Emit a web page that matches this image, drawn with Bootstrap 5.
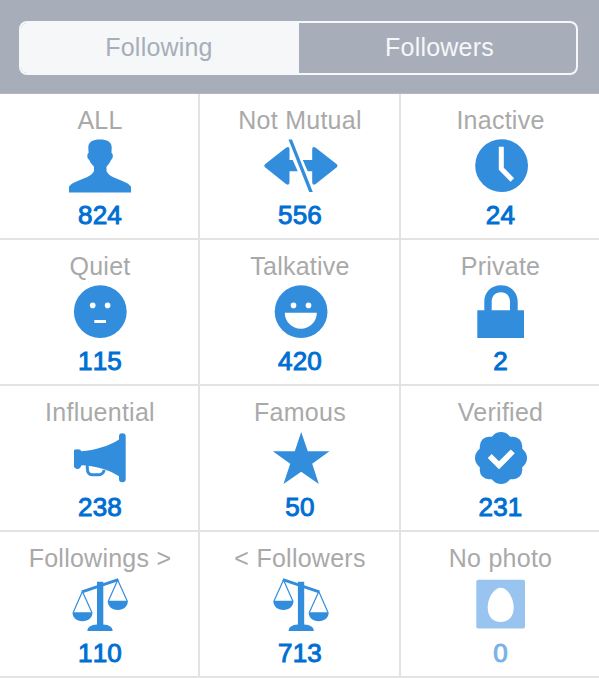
<!DOCTYPE html>
<html lang="en">
<head>
<meta charset="utf-8">
<meta name="viewport" content="width=device-width, initial-scale=1">
<title>Following</title>
<link rel="stylesheet" href="https://cdn.jsdelivr.net/npm/bootstrap@5.3.0/dist/css/bootstrap.min.css">
<style>
body{font-family:"Liberation Sans",Arial,sans-serif;background:#fff;overflow:hidden}
.topbar{height:94px;background:#a7aeb9;padding:21px 21px 0 19px;border-bottom:1px solid #b2b8c2}
.segment{height:54px;border:2px solid #f5f7f9;border-radius:8px;overflow:hidden}
.segment .btn{font-size:25px;line-height:30px;padding:0 0 2px;border:0;border-radius:0;color:#f5f7f9;letter-spacing:.2px}
.segment .btn.active{background:#f5f7f9;color:#a7aeb9;padding-right:2px}
.segment .btn:last-child{padding-left:5px}
.tiles{display:grid;grid-template-columns:200px 201px 200px;grid-auto-rows:146px}
.tile{padding-top:11px;box-shadow:inset -2px -2px #e3e3e4;color:#006fd3}
.tile-label{font-size:25px;line-height:30px;color:#a9a9a9;white-space:nowrap;letter-spacing:.25px}
.tile svg{width:80px;height:56px;margin:3px 0 6px;fill:#338ddd;flex:none}
.tile-count{font-size:26px;line-height:30px;letter-spacing:.2px;font-kerning:none;-webkit-text-stroke:1px currentColor}
.tile:not(:nth-child(3n+1)) .tile-label,.tile:not(:nth-child(3n+1)) .tile-count{margin-right:1px}
.tile.muted svg{fill:#99c4ef}
.tile.muted .tile-count{color:#7ab2e8}
</style>
</head>
<body>
<header class="topbar">
  <div class="segment btn-group d-flex" role="group">
    <button class="btn active w-50">Following</button>
    <button class="btn w-50">Followers</button>
  </div>
</header>
<main class="tiles">
  <div class="tile d-flex flex-column align-items-center">
    <div class="tile-label">ALL</div>
    <svg viewBox="0 0 80 56"><path d="M40 1.6C47 1.6 51.7 3.8 51.7 9.5L51.5 15C53.6 16 53.2 20.5 51 22C50 24.5 48.5 26.5 46.5 28.7V33C47.5 36 51 38.3 54.5 39.8C61 42.5 68 44.5 71 48.7V54.6H9V48.7C12 44.5 19 42.5 25.5 39.8C29 38.3 33 36 34 33V28.7C31.8 26.5 30.3 24.5 29.3 22C27.1 20.5 26.6 16 28.6 15L28.3 9.5C28.3 3.8 33 1.6 40 1.6Z"/></svg>
    <div class="tile-count">824</div>
  </div>
  <div class="tile d-flex flex-column align-items-center">
    <div class="tile-label">Not Mutual</div>
    <svg viewBox="0 0 80 56"><path d="M4 26.2L25 9.7Q28.5 7.8 28.5 11.5V22H31.7L36.7 33.3H28.5V44Q28.5 48 25 46L4 29.3Q2.3 27.7 4 26.2ZM75.8 26.2L54.7 9.7Q51.2 7.8 51.2 11.5V22H41.8L46.7 33.3H51.2V44Q51.2 48 54.7 46L75.8 29.3Q77.4 27.7 75.8 26.2ZM27.5 1.4H31L51.8 53.9H48.2Z"/></svg>
    <div class="tile-count">556</div>
  </div>
  <div class="tile d-flex flex-column align-items-center">
    <div class="tile-label">Inactive</div>
    <svg viewBox="0 0 80 56"><circle cx="40.6" cy="27.7" r="26.4"/><path d="M40.3 8.7V30.7L51.3 41.9" fill="none" stroke="#fff" stroke-width="5"/></svg>
    <div class="tile-count">24</div>
  </div>
  <div class="tile d-flex flex-column align-items-center">
    <div class="tile-label">Quiet</div>
    <svg viewBox="0 0 80 56"><circle cx="40.3" cy="27.7" r="26.4"/><g fill="#fff"><circle cx="32.7" cy="21.4" r="2.8"/><circle cx="47.6" cy="21.4" r="2.8"/><path d="M34.3 36H46V39H34.3Z"/></g></svg>
    <div class="tile-count">115</div>
  </div>
  <div class="tile d-flex flex-column align-items-center">
    <div class="tile-label">Talkative</div>
    <svg viewBox="0 0 80 56"><circle cx="40.1" cy="27.7" r="26.4"/><g fill="#fff"><circle cx="32.5" cy="21.4" r="2.8"/><circle cx="47.5" cy="21.4" r="2.8"/><path d="M23.8 28.7H55.8A16 16 0 0 1 23.8 28.7Z"/></g></svg>
    <div class="tile-count">420</div>
  </div>
  <div class="tile d-flex flex-column align-items-center">
    <div class="tile-label">Private</div>
    <svg viewBox="0 0 80 56"><path d="M16.3 26.3H23.3V17.5C23.3 8 30.5 1.3 40 1.3S56.7 8 56.7 17.5V26.3H63V54H16.3ZM30.7 26.3H49V18C49 12 45.5 8.3 39.9 8.3S30.7 12 30.7 18Z"/></svg>
    <div class="tile-count">2</div>
  </div>
  <div class="tile d-flex flex-column align-items-center">
    <div class="tile-label">Influential</div>
    <svg viewBox="0 0 80 56"><path d="M14 19.8Q20.6 18 21.3 21.3C35 20.5 50 15.5 59 9.5V6.5Q59 3.3 62.3 3.3Q65.7 3.3 65.7 6.5V49Q65.7 52.3 62.3 52.3Q59 52.3 59 49V46.3C49 39.5 35 35.7 21.5 35.2Q20 39.5 16.5 39L14 37Z"/><path d="M27.3 35V38.5Q27.6 44.7 32 44.7H39Q43 44.7 44.2 40" fill="none" stroke="#338ddd" stroke-width="3"/></svg>
    <div class="tile-count">238</div>
  </div>
  <div class="tile d-flex flex-column align-items-center">
    <div class="tile-label">Famous</div>
    <svg viewBox="0 0 80 56"><path d="M40.2 2L46.8 21.3H68.5L51.2 33.7L57.8 54L40.2 41.7L22.5 54L29.2 33.7L11.8 21.3H33.8Z"/></svg>
    <div class="tile-count">50</div>
  </div>
  <div class="tile d-flex flex-column align-items-center">
    <div class="tile-label">Verified</div>
    <svg viewBox="0 0 80 56"><circle cx="40" cy="28" r="23"/><circle cx="40" cy="13" r="11"/><circle cx="40" cy="43" r="11"/><circle cx="25" cy="28" r="11"/><circle cx="55" cy="28" r="11"/><rect x="18.8" y="6.8" width="42.4" height="42.4" rx="9"/><path d="M28.7 26L38 35.3L51.8 21.4" fill="none" stroke="#fff" stroke-width="5.6"/></svg>
    <div class="tile-count">231</div>
  </div>
  <div class="tile d-flex flex-column align-items-center">
    <div class="tile-label">Followings &gt;</div>
    <svg viewBox="0 0 80 56"><path d="M37 5.7H43.3V48.5Q52.5 49 52.7 55H27.3Q27.5 49 37 48.5ZM12.5 36.3H32.5C32.5 41.7 28.5 45.3 22.5 45.3S12.5 41.7 12.5 36.3ZM47.7 24.7H67.9C67.9 30.1 63.8 34 57.8 34S47.7 30.1 47.7 24.7Z"/><g fill="none" stroke="#338ddd"><path d="M22 15.8L58.3 3.6" stroke-width="3"/><path d="M13.2 36.5L22.4 15.5L31.9 36.5M48.4 25L57.7 4L67.2 25" stroke-width="1.2"/></g></svg>
    <div class="tile-count">110</div>
  </div>
  <div class="tile d-flex flex-column align-items-center">
    <div class="tile-label">&lt; Followers</div>
    <svg viewBox="0 0 80 56"><g transform="matrix(-1 0 0 1 80.2 0)"><path d="M37 5.7H43.3V48.5Q52.5 49 52.7 55H27.3Q27.5 49 37 48.5ZM12.5 36.3H32.5C32.5 41.7 28.5 45.3 22.5 45.3S12.5 41.7 12.5 36.3ZM47.7 24.7H67.9C67.9 30.1 63.8 34 57.8 34S47.7 30.1 47.7 24.7Z"/><g fill="none" stroke="#338ddd"><path d="M22 15.8L58.3 3.6" stroke-width="3"/><path d="M13.2 36.5L22.4 15.5L31.9 36.5M48.4 25L57.7 4L67.2 25" stroke-width="1.2"/></g></g></svg>
    <div class="tile-count">713</div>
  </div>
  <div class="tile muted d-flex flex-column align-items-center">
    <div class="tile-label">No photo</div>
    <svg viewBox="0 0 80 56"><rect x="15.3" y="3.7" width="48.7" height="48.7" rx="2"/><path d="M39.7 11.7C46.5 11.7 52.7 22 52.7 31.5C52.7 40.5 47.5 46 39.7 46S26.7 40.5 26.7 31.5C26.7 22 33 11.7 39.7 11.7Z" fill="#fff"/></svg>
    <div class="tile-count">0</div>
  </div>
</main>
<script src="https://cdn.jsdelivr.net/npm/bootstrap@5.3.0/dist/js/bootstrap.bundle.min.js"></script>
</body>
</html>
